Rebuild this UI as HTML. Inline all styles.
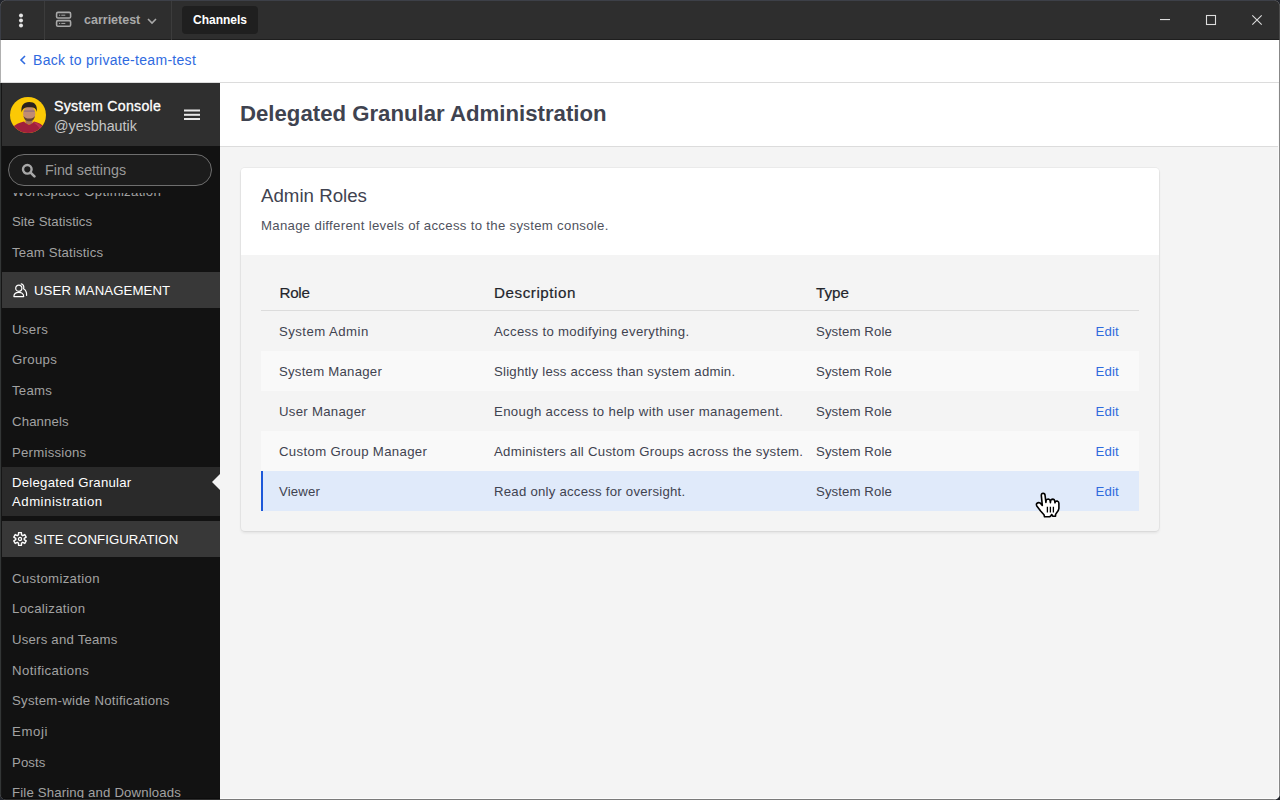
<!DOCTYPE html>
<html><head><meta charset="utf-8">
<style>
*{box-sizing:border-box;margin:0;padding:0}
html,body{width:1280px;height:800px;overflow:hidden;background:#22252c}
body{font-family:"Liberation Sans",sans-serif;position:relative}
.abs{position:absolute}
.win{position:absolute;left:0;top:0;width:1280px;height:800px;background:#f4f4f4;border-radius:7px;overflow:hidden}
/* title bar */
.tb{position:absolute;left:0;top:0;width:1280px;height:40px;background:#2e2e2e;border-top:1px solid #3d4048;border-bottom:1px solid #1e1e1e}
.sep{position:absolute;top:0;width:1px;height:39px;background:#3c3c3c}
.tab{position:absolute;left:182px;top:5px;width:76px;height:28px;background:#1f1f1f;border-radius:4px;color:#fff;font-weight:700;font-size:12px;line-height:28px;text-align:center}
.srv{position:absolute;left:84px;top:10px;color:#a9a9a9;font-weight:700;font-size:12.5px;line-height:18px}
/* back bar */
.back{position:absolute;left:0;top:40px;width:1280px;height:43px;background:#fff;border-bottom:1px solid #dcdcdc}
.back span{position:absolute;left:33px;top:9.5px;font-size:14px;letter-spacing:0.3px;line-height:20px;color:#2f6ae0}
/* sidebar */
.sb{position:absolute;left:0;top:83px;width:220px;height:717px;background:#121212}
.sbh{position:absolute;left:0;top:0;width:220px;height:63px;background:#2f2f2f}
.nav{position:absolute;left:0;top:110px;width:220px;height:607px;overflow:hidden}
.it{position:absolute;left:12px;font-size:13.2px;color:#a2a2a2;white-space:nowrap;line-height:16px}
.sec{position:absolute;left:0;width:220px;height:36px;background:#383838}
.sec span{position:absolute;left:34px;top:10.5px;font-size:13.2px;color:#fff;line-height:16px}
/* main */
.mh{position:absolute;left:220px;top:83px;width:1060px;height:64px;background:#fff;border-bottom:1px solid #dcdcdc}
.mh h1{position:absolute;left:20px;top:17.5px;font-size:22.2px;font-weight:700;color:#3f4350;line-height:26px;white-space:nowrap}
.card{position:absolute;left:241px;top:168px;width:918px;height:363px;background:#f4f4f4;border-radius:4px;box-shadow:0 0 0 1px rgba(0,0,0,0.04),0 2px 3px rgba(0,0,0,0.08);overflow:hidden}
.ch{position:absolute;left:0;top:0;width:918px;height:87px;background:#fff}
.row{position:absolute;left:20px;width:878px;height:40px}
.row .c{position:absolute;top:12.5px;font-size:13.2px;color:#3f4350;line-height:16px;white-space:nowrap}
.row .e{position:absolute;left:834.5px;top:12.5px;font-size:13.2px;letter-spacing:0.17px;color:#2f6bdd;line-height:16px}
</style></head>
<body>
<div class="win">
  <div class="tb">
    <div class="sep" style="left:44px"></div>
    <div class="sep" style="left:171px"></div>
    <div class="tab">Channels</div>
    <div class="srv">carrietest</div>
    <svg class="abs" style="left:18px;top:11.3px" width="6" height="16" viewBox="0 0 6 16">
      <circle cx="3" cy="3.4" r="2" fill="#e6e6e6"/><circle cx="3" cy="8.4" r="2" fill="#e6e6e6"/><circle cx="3" cy="13.4" r="2" fill="#e6e6e6"/>
    </svg>
    <svg class="abs" style="left:55px;top:10.2px" width="18" height="17" viewBox="0 0 18 17">
      <rect x="1.6" y="1.4" width="14" height="5.6" rx="1.3" fill="none" stroke="#a9a9a9" stroke-width="1.6"/>
      <rect x="1.6" y="9.6" width="14" height="5.6" rx="1.3" fill="none" stroke="#a9a9a9" stroke-width="1.6"/>
      <rect x="4" y="3.7" width="1.2" height="1" fill="#a9a9a9"/><rect x="6.3" y="3.7" width="4" height="1" fill="#a9a9a9"/>
      <rect x="4" y="11.9" width="1.2" height="1" fill="#a9a9a9"/><rect x="6.3" y="11.9" width="4" height="1" fill="#a9a9a9"/>
    </svg>
    <svg class="abs" style="left:146px;top:15px" width="12" height="10" viewBox="0 0 12 10">
      <path d="M2 3 L6 7 L10 3" fill="none" stroke="#a9a9a9" stroke-width="1.6"/>
    </svg>
    <svg class="abs" style="left:1159px;top:11px" width="14" height="16" viewBox="0 0 14 16"><rect x="1" y="7" width="10" height="1.1" fill="#dcdcdc"/></svg>
    <svg class="abs" style="left:1205px;top:13px" width="14" height="14" viewBox="0 0 14 14"><rect x="1.5" y="1.5" width="9" height="9" fill="none" stroke="#dcdcdc" stroke-width="1.1"/></svg>
    <svg class="abs" style="left:1251px;top:13px" width="14" height="14" viewBox="0 0 14 14"><path d="M1.3 1.3 L10.7 10.7 M10.7 1.3 L1.3 10.7" stroke="#dcdcdc" stroke-width="1.1"/></svg>
  </div>
  <div class="back"><svg class="abs" style="left:19px;top:15px" width="8" height="10" viewBox="0 0 8 10"><path d="M6 1 L2 5 L6 9" fill="none" stroke="#2f6ae0" stroke-width="1.6"/></svg><span>Back to private-team-test</span></div>

  <div class="sb">
    <div class="sbh">
      <svg class="abs" style="left:10px;top:14px" width="36" height="36" viewBox="0 0 36 36">
        <defs><clipPath id="av"><circle cx="18" cy="18" r="18"/></clipPath></defs>
        <g clip-path="url(#av)">
          <rect width="36" height="36" fill="#fbc905"/>
          <rect x="15.5" y="20" width="7" height="7" fill="#a87058"/>
          <ellipse cx="19.2" cy="16.8" rx="6.1" ry="7.4" fill="#c28c72"/>
          <path d="M13.5 19 C14.5 23.5 16.5 24.3 19.2 24.3 C22 24.3 24 23.5 24.9 19 C23.5 21 22 21.6 19.2 21.6 C16.5 21.6 15 21 13.5 19Z" fill="#3e2a22" opacity="0.75"/>
          <path d="M11.6 15.5 C10.6 8.5 13.6 5 19.2 5 C24.8 5 27.6 8.2 26.8 15 C26 11.6 24.6 10.2 19.2 10.2 C14.2 10.2 12.4 12 11.6 15.5Z" fill="#2a221e"/>
          <rect x="13.8" y="13.4" width="11" height="1.3" rx="0.6" fill="#6c5a7e" opacity="0.55"/>
          <path d="M0 36 L1.5 31.5 C5 27.5 9.5 25.5 14 24.6 C16 26.8 17.5 27.6 19 27.6 C21 27.6 22.5 26.6 24 24.6 C28.5 25.5 32.5 27.8 35 31 L36 36 Z" fill="#a01f3c"/>
          <path d="M24 25 C28 26 31 28 33 30.5 L31 33 C29 30 27 28 24.5 26.5Z" fill="#c9395e" opacity="0.6"/>
        </g>
      </svg>
      <div class="abs" style="left:54px;top:13.5px;font-size:14.2px;font-weight:400;-webkit-text-stroke:0.3px #fff;letter-spacing:0.28px;color:#fff;line-height:18px;white-space:nowrap">System Console</div>
      <div class="abs" style="left:54px;top:34px;font-size:14.3px;color:#c6c6c6;line-height:18px;white-space:nowrap">@yesbhautik</div>
      <svg class="abs" style="left:184px;top:26px" width="16" height="12" viewBox="0 0 16 12">
        <rect x="0" y="0.5" width="16" height="2" fill="#e8e8e8"/>
        <rect x="0" y="4.8" width="16" height="2" fill="#e8e8e8"/>
        <rect x="0" y="9" width="16" height="2" fill="#e8e8e8"/>
      </svg>
    </div>
    <!-- search -->
    <div class="abs" style="left:8px;top:71px;width:204px;height:32px;border:1px solid #6e6e6e;border-radius:16px;background:#1c1c1c"></div>
    <svg class="abs" style="left:21px;top:80px" width="15" height="15" viewBox="0 0 15 15">
      <circle cx="6.3" cy="6.3" r="4.3" fill="none" stroke="#a8a8a8" stroke-width="2.4"/>
      <path d="M9.6 9.6 L13.4 13.4" stroke="#a8a8a8" stroke-width="2.6" stroke-linecap="round"/>
    </svg>
    <div class="abs" style="left:45px;top:78px;font-size:14.3px;color:#9a9a9a;line-height:18px;white-space:nowrap">Find settings</div>

    <div class="nav">
      <div class="it" style="top:-9.5px;letter-spacing:0.29px">Workspace Optimization</div>
      <div class="it" style="top:20.5px;letter-spacing:0.07px">Site Statistics</div>
      <div class="it" style="top:51.5px;letter-spacing:0.17px">Team Statistics</div>
      <div class="sec" style="top:79px">
        <svg class="abs" style="left:13px;top:11px" width="15" height="15" viewBox="0 0 15 15">
          <circle cx="5.8" cy="5.2" r="3.1" fill="none" stroke="#fff" stroke-width="1.2"/>
          <path d="M0.9 13.6 C0.9 10.6 3 9.4 5.8 9.4 C8.6 9.4 10.7 10.6 10.7 13.6 Z" fill="none" stroke="#fff" stroke-width="1.2" stroke-linejoin="round"/>
          <path d="M8.2 0.8 C10.6 1.3 11.2 3.6 10.6 5.8 C12.6 7 13.8 9.6 13.6 12.4" fill="none" stroke="#fff" stroke-width="1.2" stroke-linecap="round"/>
        </svg>
        <span style="letter-spacing:0.09px">USER MANAGEMENT</span>
      </div>
      <div class="it" style="top:128.50px;letter-spacing:0.35px">Users</div>
      <div class="it" style="top:159.40px;letter-spacing:0.32px">Groups</div>
      <div class="it" style="top:190.30px;letter-spacing:0.25px">Teams</div>
      <div class="it" style="top:221.20px;letter-spacing:0.14px">Channels</div>
      <div class="it" style="top:252.10px;letter-spacing:0.24px">Permissions</div>
      <div class="abs" style="left:0;top:274px;width:220px;height:49px;background:#2a2a2a"></div>
      <div class="it" style="top:279.5px;color:#fff;line-height:19px;white-space:normal"><span style="letter-spacing:0.24px">Delegated Granular</span><br><span style="letter-spacing:0.5px">Administration</span></div>
      <svg class="abs" style="left:212px;top:280.5px" width="8" height="16" viewBox="0 0 8 16"><path d="M8 0 L0 8 L8 16 Z" fill="#f4f4f4"/></svg>
      <div class="sec" style="top:328px">
        <svg class="abs" style="left:13px;top:11px" width="14" height="14" viewBox="0 0 14 14"><path d="M5.49 2.98 L5.58 0.66 L8.42 0.66 L8.51 2.98 L9.73 3.68 L11.78 2.60 L13.20 5.06 L11.24 6.30 L11.24 7.70 L13.20 8.94 L11.78 11.40 L9.73 10.32 L8.51 11.02 L8.42 13.34 L5.58 13.34 L5.49 11.02 L4.27 10.32 L2.22 11.40 L0.80 8.94 L2.76 7.70 L2.76 6.30 L0.80 5.06 L2.22 2.60 L4.27 3.68 Z" fill="none" stroke="#fff" stroke-width="1.4" stroke-linejoin="round"/><circle cx="7" cy="7" r="1.55" fill="none" stroke="#fff" stroke-width="1.3"/></svg>
        <span style="letter-spacing:0.09px">SITE CONFIGURATION</span>
      </div>
      <div class="it" style="top:377.50px;letter-spacing:0.33px">Customization</div>
      <div class="it" style="top:408.17px;letter-spacing:0.31px">Localization</div>
      <div class="it" style="top:438.83px;letter-spacing:0.21px">Users and Teams</div>
      <div class="it" style="top:469.50px;letter-spacing:0.42px">Notifications</div>
      <div class="it" style="top:500.17px;letter-spacing:0.27px">System-wide Notifications</div>
      <div class="it" style="top:530.84px;letter-spacing:0.60px">Emoji</div>
      <div class="it" style="top:561.50px;letter-spacing:0.10px">Posts</div>
      <div class="it" style="top:592.17px;letter-spacing:0.16px">File Sharing and Downloads</div>
    </div>
  </div>

  <div class="mh"><h1>Delegated Granular Administration</h1></div>
  <div class="card">
    <div class="ch">
      <div class="abs" style="left:20px;top:16px;font-size:18.7px;color:#3f4350;line-height:24px;white-space:nowrap">Admin Roles</div>
      <div class="abs" style="left:20px;top:48.5px;font-size:13.2px;letter-spacing:0.31px;color:#4f525d;line-height:18px;white-space:nowrap">Manage different levels of access to the system console.</div>
    </div>
    <div class="abs" style="left:38.5px;top:115.5px;font-size:15.2px;font-weight:400;-webkit-text-stroke:0.2px #23252b;color:#23252b;line-height:18px;letter-spacing:-0.3px">Role</div>
    <div class="abs" style="left:253px;top:115.5px;font-size:15.2px;font-weight:400;-webkit-text-stroke:0.2px #23252b;color:#23252b;line-height:18px;letter-spacing:0.55px">Description</div>
    <div class="abs" style="left:575px;top:115.5px;font-size:15.2px;font-weight:400;-webkit-text-stroke:0.2px #23252b;color:#23252b;line-height:18px">Type</div>
    <div class="abs" style="left:20px;top:142px;width:878px;height:1px;background:#dcdcdc"></div>
    <div class="row" style="top:143px"><span class="c" style="left:18px;letter-spacing:0.45px">System Admin</span><span class="c" style="left:233px;letter-spacing:0.32px">Access to modifying everything.</span><span class="c" style="left:555px;letter-spacing:0.10px">System Role</span><span class="e">Edit</span></div>
    <div class="row" style="top:183px;background:#f9f9f9"><span class="c" style="left:18px;letter-spacing:0.24px">System Manager</span><span class="c" style="left:233px;letter-spacing:0.23px">Slightly less access than system admin.</span><span class="c" style="left:555px;letter-spacing:0.10px">System Role</span><span class="e">Edit</span></div>
    <div class="row" style="top:223px"><span class="c" style="left:18px;letter-spacing:0.29px">User Manager</span><span class="c" style="left:233px;letter-spacing:0.35px">Enough access to help with user management.</span><span class="c" style="left:555px;letter-spacing:0.10px">System Role</span><span class="e">Edit</span></div>
    <div class="row" style="top:263px;background:#f9f9f9"><span class="c" style="left:18px;letter-spacing:0.34px">Custom Group Manager</span><span class="c" style="left:233px;letter-spacing:0.29px">Administers all Custom Groups across the system.</span><span class="c" style="left:555px;letter-spacing:0.10px">System Role</span><span class="e">Edit</span></div>
    <div class="row" style="top:303px;background:#e0eafa;border-left:2px solid #1c58d9"><span class="c" style="left:16px;letter-spacing:0.16px">Viewer</span><span class="c" style="left:231px;letter-spacing:0.24px">Read only access for oversight.</span><span class="c" style="left:553px;letter-spacing:0.10px">System Role</span><span class="e" style="left:832.5px">Edit</span></div>
  </div>
  <!-- cursor -->
  <svg class="abs" style="left:1030px;top:488px" width="36" height="34" viewBox="0 0 36 34">
    <path d="M12.3 17.4 L11.3 7.4 Q11.3 5.3 13.1 5.3 Q15 5.4 15.1 7.6 L15.9 14.4 L16.2 12.2 Q16.7 11 18.3 11 Q19.9 11.2 20.1 12.6 L20.4 14.6 L20.7 12.4 Q21.2 11.1 22.9 11.1 Q24.5 11.3 24.7 12.8 L25.0 14.8 L25.3 13.8 Q25.9 12.9 27.2 13 Q28.9 13.6 28.9 15.2 L28.9 20.4 Q28.6 22.5 27.2 24 L25.6 26.4 L25.5 28.1 L22.9 28.3 L21.7 26.5 L20.5 28.2 L19.5 28.7 L14.5 28.7 L14 26.8 L10.6 23 L6.8 17.9 Q6 16.4 6.9 15.3 Q8.1 14.2 10.2 14.9 Z" fill="#fff" stroke="#000" stroke-width="1.6" stroke-linejoin="round"/>
    <path d="M17.4 18.8 L17.4 24.6 M20.4 18.8 L20.4 24.6 M23.4 18.8 L23.4 24.6" stroke="#000" stroke-width="1.3"/>
  </svg>
  <!-- window frame -->
  <div class="abs" style="left:0;top:40px;width:1px;height:43px;background:#b0b0b0"></div>
  <div class="abs" style="left:0;top:83px;width:1px;height:717px;background:#333636"></div>
  <div class="abs" style="left:1px;top:83px;width:1px;height:716px;background:#161616"></div>
  <div class="abs" style="left:1279px;top:40px;width:1px;height:760px;background:#888"></div>
  <div class="abs" style="left:1278px;top:83px;width:1px;height:716px;background:#fafafa"></div>
  <div class="abs" style="left:0;top:798px;width:220px;height:1px;background:#0c0c0c"></div>
  <div class="abs" style="left:0;top:799px;width:220px;height:1px;background:#2e2e2e"></div>
  <div class="abs" style="left:220px;top:798px;width:1060px;height:1px;background:#fcfcfc"></div>
  <div class="abs" style="left:220px;top:799px;width:1060px;height:1px;background:#7a7a7a"></div>
  <div class="abs" style="left:1279px;top:0;width:1px;height:40px;background:#4a4a4a"></div>
  <div class="abs" style="left:0;top:0;width:1px;height:40px;background:#3a3d45"></div>
</div>
</body></html>
